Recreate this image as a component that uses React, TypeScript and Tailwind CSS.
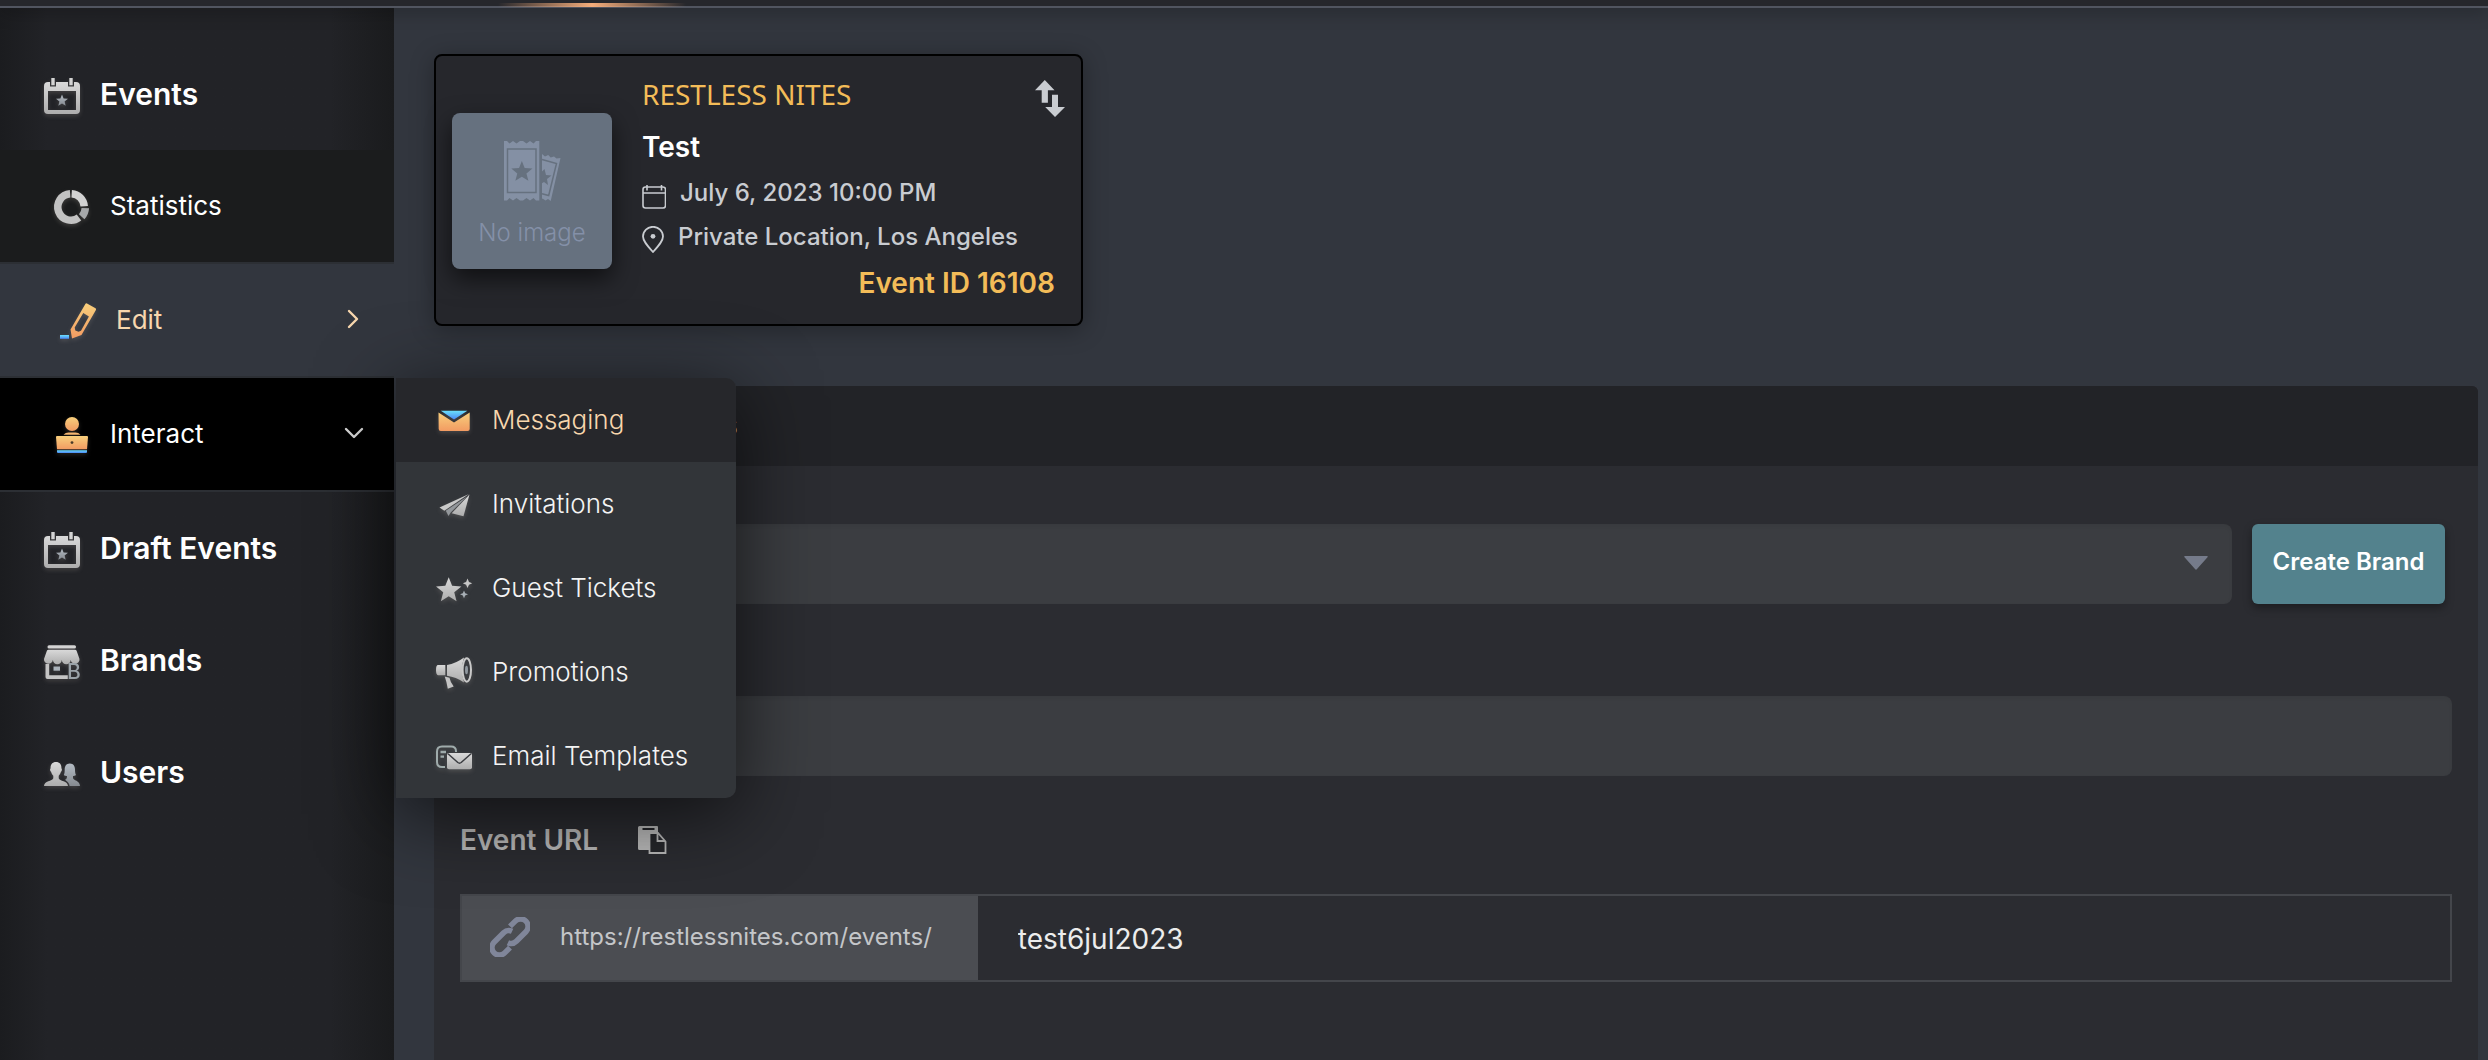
import { useState } from "react";
import type { ReactNode } from "react";

const STAR = "M12 0l3.2 8 8.8.6-6.8 5.5 2.2 8.4L12 17.9l-7.4 4.6 2.2-8.4L0 8.6 8.8 8z";

// Shared gradients for the menu icons
function IconDefs() {
  return (
    <svg className="absolute size-0" aria-hidden="true">
      <defs>
        <linearGradient id="silver" x1="0" y1="0" x2="0" y2="1">
          <stop offset="0" stopColor="#d9d9d9" />
          <stop offset="1" stopColor="#adadad" />
        </linearGradient>
        <linearGradient id="steel" x1="0" y1="0" x2="0" y2="1">
          <stop offset="0" stopColor="#b4bcc4" />
          <stop offset="1" stopColor="#858a90" />
        </linearGradient>
        <linearGradient id="amber" x1="0" y1="0" x2="0" y2="1">
          <stop offset="0" stopColor="#f8cf7c" />
          <stop offset="1" stopColor="#f29b62" />
        </linearGradient>
        <linearGradient id="sky" x1="0" y1="0" x2="0" y2="1">
          <stop offset="0" stopColor="#6be0fb" />
          <stop offset="1" stopColor="#4a86f5" />
        </linearGradient>
      </defs>
    </svg>
  );
}

function Icon({ children }: { children: ReactNode }) {
  return (
    <svg
      viewBox="0 0 36 36"
      aria-hidden="true"
      className="mt-1 size-9 shrink-0 overflow-visible drop-shadow-[0_2px_2px_rgba(200,190,180,0.2)]"
    >
      {children}
    </svg>
  );
}

function EventsIcon() {
  return (
    <Icon>
      <path
        fill="url(#silver)"
        fillRule="evenodd"
        d="M4 4h2v4.500h6V4h12v4.500h6V4h2a4 4 0 0 1 4 4v24a4 4 0 0 1-4 4H4a4 4 0 0 1-4-4V8a4 4 0 0 1 4-4zM4 13v19h28V13z"
      />
      <path fill="#d4d4d4" d="M7.300 0h3.400v7.200H7.300zM25.300 0h3.400v7.200h-3.400z" />
      <path fill="url(#steel)" transform="translate(12 16.500) scale(.5)" d={STAR} />
    </Icon>
  );
}

function StatisticsIcon() {
  return (
    <Icon>
      <g fill="none" strokeWidth="7.500">
        <path stroke="#d2d2d2" d="M17.700 4.800A13.250 13.250 0 0 1 30.200 17.300" />
        <path stroke="#a6a8aa" d="M31.300 19.200A13.250 13.250 0 0 1 27.700 27.700" />
        <path stroke="#c2c2c2" d="M25 28.600A13.250 13.250 0 1 1 16.100 4.800" />
      </g>
    </Icon>
  );
}

function EditIcon() {
  return (
    <Icon>
      <path
        fill="url(#amber)"
        fillRule="evenodd"
        d="M25.500 .8Q26 0 27 .5l8.500 4.800q1 .7.400 1.700L21.500 32 12 35.500l-1.500-9zM23.300 10 14.700 24.500l.6 3 3.200 1.200 2.500-1L28.900 13.400z"
      />
      <path fill="url(#sky)" d="M0 32h9v3.800H0z" />
    </Icon>
  );
}

function InteractIcon() {
  return (
    <Icon>
      <circle cx="18" cy="7" r="7" fill="url(#amber)" />
      <path fill="#f4b56f" d="M9.500 17.800q2-2.300 5-2.300h7q3 0 5 2.300z" />
      <path fill="url(#amber)" d="M3 19h30q1 0 1 1l-1 12.300H3L2 20q0-1 1-1z" />
      <circle cx="18" cy="25.600" r="1.400" fill="#4a3a28" />
      <path fill="url(#sky)" d="M3 33.200h30V35q0 1-1 1H4q-1 0-1-1z" />
    </Icon>
  );
}

function BrandsIcon() {
  return (
    <Icon>
      <rect x="3.500" y="1.200" width="28.500" height="3.300" rx="1.500" fill="#d4d4d4" />
      <path
        fill="url(#silver)"
        d="M4.500 5.700h26.500q1.200 0 1.600 1l2.900 8.300a4.400 4.400 0 0 1-8.800 0.800 4.400 4.400 0 0 1-8.900 0 4.400 4.400 0 0 1-8.900 0A4.400 4.400 0 0 1 0 15L2.900 6.700q.4-1 1.600-1z"
      />
      <path fill="#c4c4c4" d="M1.500 20h3.700v11.200h18.600V35H3.500q-2 0-2-2z" />
      <rect x="9.500" y="22.500" width="6.500" height="4.200" fill="#aab2ba" />
      <text x="23" y="35" fontSize="21" fontWeight="500" fill="#9aa2a8" className="font-['Inter',sans-serif]">
        B
      </text>
    </Icon>
  );
}

function UsersIcon() {
  return (
    <Icon>
      <path
        fill="url(#steel)"
        d="M25.800 7.500c3.700 0 5.200 2.800 5.200 6 0 2.700.3 4.200 1 5.500-1 .8-2 1-3 1v2c0 2.200 7 2.800 7 8H25.600c-.2-3-2.600-4.600-4.600-6.200 1.800-.8 2-1.800 2-3.800-1.200 0-2.400-.3-3.200-1 .8-1.600.9-3.200.9-5.500 0-3.200 1.400-6 5.100-6z"
      />
      <path
        fill="url(#silver)"
        d="M12 6c3.800 0 5.600 2.600 5.400 6.200.9.300.6 3.200-.5 3.600-.3 1.800-1.300 3-2.200 3.900v2.500C15.500 25 24 25 24 30H0c0-5 8.500-5 9.300-7.800v-2.500c-.9-.9-1.900-2.100-2.200-3.900-1.100-.4-1.400-3.300-.5-3.600C6.400 8.600 8.200 6 12 6z"
      />
    </Icon>
  );
}

function MessagingIcon() {
  return (
    <Icon>
      <path fill="url(#amber)" d="M2.500 9.500 18 19.400 33.700 9.500V26q0 2-2 2h-27q-2 0-2-2z" />
      <path fill="url(#sky)" d="M4.800 7.700h26.600L18 16.600z" />
    </Icon>
  );
}

function InvitationsIcon() {
  return (
    <Icon>
      <path fill="#c9c9c9" d="M33 7 3.500 20.500l4.800 3.200z" />
      <path fill="#93979b" d="M31 9.500 9.800 23.800l2.700 5.200 2.200-3.500z" />
      <path fill="url(#silver)" d="M33.500 7.500 15.700 26.300 27.500 29.300z" />
    </Icon>
  );
}

function GuestTicketsIcon() {
  return (
    <Icon>
      <path fill="url(#silver)" transform="translate(0 6.300) scale(1.060)" d={STAR} />
      <path fill="#c8c8c8" d="M31.500 7.600 33 11l3.200 1.300L33 13.700l-1.500 3.400-1.400-3.400-3.300-1.400 3.300-1.300z" />
      <path fill="#a9b0b6" d="M28 19.500l1.200 2.700 2.800 1.100-2.800 1.200L28 27.300l-1.200-2.800-2.800-1.200 2.800-1.100z" />
    </Icon>
  );
}

function PromotionsIcon() {
  return (
    <Icon>
      <path fill="url(#silver)" d="M2 10h7.300v10.300H2Q0 20 0 15t2-5z" />
      <path fill="url(#silver)" d="M11 10Q20 8.500 28 2.500q-4 12.500 0 25Q20 22 11 20.700z" />
      <path fill="#c4c4c4" d="M8.700 21.500l4.800 1.200q1 5 4.200 8.800l-5.900 2.200q-1-6.500-3.100-12.200z" />
      <ellipse cx="30.800" cy="15" rx="4.200" ry="11.700" fill="#3a3c40" stroke="#c9c9c9" strokeWidth="2" />
      <ellipse cx="30.500" cy="15" rx="1.500" ry="4.200" fill="#8f979e" />
    </Icon>
  );
}

function EmailTemplatesIcon() {
  return (
    <Icon>
      <g fill="none" stroke="#9fabab" strokeWidth="2">
        <path d="M9 28H6q-5 0-5-5V12.500q0-5 5-5h9q5 0 5 4.700V13" />
        <path d="M4.500 13H10M4.500 17.700H8" strokeWidth="2.300" />
      </g>
      <rect x="11" y="14" width="25" height="16.300" rx="2" fill="url(#silver)" />
      <path d="M12 14.800 21.800 23.500q1.700 1.300 3.400 0L35 14.800" fill="none" stroke="#3a3c40" strokeWidth="1.500" />
    </Icon>
  );
}

function ChevronIcon({ down }: { down?: boolean }) {
  return (
    <svg
      viewBox="0 0 20 20"
      aria-hidden="true"
      className={down ? "size-5 text-[#dcdcdc]" : "size-5 text-[#f8d7ae]"}
    >
      <path
        d={down ? "M2 6l8 8 8-8" : "M5 2l8 8-8 8"}
        fill="none"
        stroke="currentColor"
        strokeWidth="2.400"
        strokeLinecap="round"
        strokeLinejoin="round"
      />
    </svg>
  );
}

function TicketsIcon() {
  return (
    <svg viewBox="0 0 57 60" aria-hidden="true" className="h-[60px] w-[57px]">
      <path
        fill="#8490a4"
        d="M38 13l3 2.500 3.200-1.500 2.500 2.500 3.300-1 2.500 2 4-.500-9.800 43-2.700-2-2.500 1.500-3-2L38 58z"
      />
      <path d="M38 18.500l14.500 4-7.800 32L38 52.800" fill="none" stroke="#66717f" strokeWidth="1.500" />
      <path fill="#66717f" d="M40.500 28l1.500 6 5.500.500-4.500 3.500 1 6-4-3-2.500 1.500V31z" />
      <path
        fill="#8490a4"
        d="M0 0h3l2.500 2.500L9 0l3.500 2.500L16 0h3l3.500 2.500L26 0l3.500 2.500L32 0h3.300v59.500H32L29.500 57 26 59.500 22.500 57 19 59.500h-3L12.500 57 9 59.500 5.500 57 3 59.500H0z"
      />
      <rect x="3.500" y="8" width="28.500" height="43.500" fill="none" stroke="#66717f" strokeWidth="1.500" />
      <path fill="#66717f" transform="translate(7.300 20) scale(.88)" d={STAR} />
    </svg>
  );
}

const menu = [
  { label: "Messaging", icon: <MessagingIcon />, active: true },
  { label: "Invitations", icon: <InvitationsIcon /> },
  { label: "Guest Tickets", icon: <GuestTicketsIcon /> },
  { label: "Promotions", icon: <PromotionsIcon /> },
  { label: "Email Templates", icon: <EmailTemplatesIcon /> },
];

function InteractMenu() {
  return (
    <ul className="absolute top-0 left-full z-20 ml-0.5 w-[340px] overflow-hidden rounded-r-[10px] bg-[#323539] shadow-[0_16px_80px_rgba(0,0,0,0.65)]">
      {menu.map((item) => (
        <li key={item.label}>
          <a
            href="#"
            className={
              item.active
                ? "flex h-21 items-center gap-5 bg-[#26272b] pb-0.5 pl-10 text-[26px] font-light text-[#f8d7ae]"
                : "flex h-21 items-center gap-5 pb-0.5 pl-10 text-[26px] font-light text-[#f4f4f4]"
            }
          >
            {item.icon}
            {item.label}
          </a>
        </li>
      ))}
    </ul>
  );
}

function TopLink({ label, icon }: { label: string; icon: ReactNode }) {
  return (
    <li>
      <a href="#" className="flex h-28 items-center gap-5 pl-11 text-[30px] font-semibold text-white">
        {icon}
        {label}
      </a>
    </li>
  );
}

function Sidebar() {
  const [open, setOpen] = useState(true);

  return (
    <nav className="relative z-10 w-[394px] shrink-0 bg-[#222327] bg-linear-to-r from-[#1b1c1f] from-0% via-[#222327] via-12% to-[#222327]">
      <div className="pointer-events-none absolute inset-y-0 right-0 w-16 bg-linear-to-r from-transparent to-[#1a1b1d]" />
      <ul className="relative pt-[30px]">
        <TopLink label="Events" icon={<EventsIcon />} />
        <li>
          <a
            href="#"
            className="flex h-28 items-center gap-5 bg-[#1b1c1d] pb-0.5 pl-[54px] text-[26px] text-white"
          >
            <StatisticsIcon />
            Statistics
          </a>
        </li>
        <li>
          <a
            href="#"
            className="flex h-29 items-center gap-5 border-y-2 border-[#2c2f34] bg-[#32363e] pr-[30px] pb-0.5 pl-[60px] text-[26px] text-[#f8d7ae]"
          >
            <EditIcon />
            <span className="grow">Edit</span>
            <ChevronIcon />
          </a>
        </li>
        <li className="relative">
          <button
            type="button"
            aria-expanded={open}
            onClick={() => setOpen((o) => !o)}
            className="flex h-[114px] w-full items-center gap-5 border-b-2 border-[#2c2f34] bg-black pr-[30px] pb-0.5 pl-[54px] text-left text-[26px] text-white"
          >
            <InteractIcon />
            <span className="grow">Interact</span>
            <ChevronIcon down />
          </button>
          {open && <InteractMenu />}
        </li>
        <TopLink label="Draft Events" icon={<EventsIcon />} />
        <TopLink label="Brands" icon={<BrandsIcon />} />
        <TopLink label="Users" icon={<UsersIcon />} />
      </ul>
    </nav>
  );
}

function EventCard() {
  return (
    <section className="flex w-[649px] items-center rounded-lg border-2 border-black bg-[#26272c] px-4 pt-[18px] pb-[21px] shadow-[0_4px_24px_rgba(0,0,0,0.3)]">
      <div className="mt-1 flex h-[156px] w-40 shrink-0 flex-col items-center justify-end gap-4 rounded-lg bg-[#66717f] pb-5 shadow-[0_10px_24px_rgba(0,0,0,0.6)]">
        <TicketsIcon />
        <p className="text-2xl font-light text-[#8490a8]">No image</p>
      </div>
      <div className="ml-[30px] grow">
        <div className="flex h-[45px] items-start justify-between">
          <h2 className="font-['Noto_Sans',sans-serif] text-[28px] leading-10 text-[#f3bc58]">
            RESTLESS NITES
          </h2>
          <button type="button" aria-label="Switch event" className="mt-1.5">
            <svg viewBox="0 0 30 37" className="h-[37px] w-[30px]" fill="#c9ccd1">
              <path d="M9.800 0l9.700 10.300h-6.600v12.400H6.700V10.300H0zM17 14.700h6V27h7l-10 10-9.800-10H17z" />
            </svg>
          </button>
        </div>
        <h3 className="mt-2 text-[28px] leading-10 font-semibold text-white">Test</h3>
        <p className="mt-2 flex items-center gap-3.5 text-2xl leading-9 font-medium text-[#c9ccd1]">
          <svg viewBox="0 0 24 24" aria-hidden="true" className="mt-2 size-6" fill="none" stroke="currentColor" strokeWidth="1.600">
            <rect x="1" y="2" width="22.500" height="21" rx="2.500" />
            <path d="M1 8h22M5 0v5.500M19.500 0v5.500" />
          </svg>
          July 6, 2023 10:00 PM
        </p>
        <p className="mt-2 flex items-center gap-3.5 text-2xl leading-9 font-medium text-[#c9ccd1]">
          <svg viewBox="0 0 22 27" aria-hidden="true" className="mt-1 h-[27px] w-[22px]" fill="none" stroke="currentColor" strokeWidth="1.800">
            <path d="M11 26C5 19.500 1 15 1 10.500a10 9.700 0 0 1 20 0C21 15 17 19.500 11 26z" />
            <circle cx="11" cy="10.300" r="2.400" fill="currentColor" stroke="none" />
          </svg>
          Private Location, Los Angeles
        </p>
        <p className="mt-2 pr-2.5 text-right text-[28px] leading-10 font-semibold text-[#f3bc58]">
          Event ID 16108
        </p>
      </div>
    </section>
  );
}

function EventForm() {
  return (
    <section className="mt-[60px] flex grow flex-col overflow-hidden rounded-t-md bg-[#2b2c31] text-[28px]">
      <h2 className="flex h-20 items-center bg-[#222327] px-[26px] pb-0.5 font-medium text-[#c2c2c2]">
        Event Details &amp; Links
      </h2>
      <form className="flex flex-col px-[26px] pb-10">
        <label htmlFor="brand" className="h-[58px] leading-[58px] text-[#b4b5b7]">
          Brand
        </label>
        <div className="flex gap-5 pr-[7px]">
          <div className="relative grow">
            <select
              id="brand"
              className="h-20 w-full appearance-none rounded-lg bg-[#3b3d41] px-8 text-[#e8e8e8] inset-shadow-sm"
            >
              <option>Restless Nites</option>
            </select>
            <svg
              viewBox="0 0 24 14"
              aria-hidden="true"
              className="pointer-events-none absolute top-8 right-6 h-3.5 w-6"
            >
              <path fill="#757b8a" d="M1 0h22q1.500 0 .5 1.300L13 13q-1 1.500-2 0L.5 1.300Q-.5 0 1 0z" />
            </svg>
          </div>
          <button
            type="button"
            className="h-20 w-[193px] rounded-md bg-[#53828d] pb-1 text-2xl font-semibold text-white shadow-[0_4px_8px_rgba(0,0,0,0.35)]"
          >
            Create Brand
          </button>
        </div>
        <label htmlFor="name" className="mt-8 h-15 leading-15 text-[#b4b5b7]">
          Event Name
        </label>
        <input
          id="name"
          defaultValue="Test"
          className="h-20 w-full rounded-lg bg-[#3b3d41] px-8 text-[#e8e8e8] inset-shadow-sm"
        />
        <div className="mt-11 flex h-10 items-center gap-10">
          <label htmlFor="url" className="font-semibold text-[#b9b9b9]">
            Event URL
          </label>
          <button type="button" aria-label="Copy event URL">
            <svg viewBox="0 0 29 28" className="h-7 w-[29px]">
              <path fill="#bababa" d="M1.500 0H19q1 0 1 1v5h-9v18H1.500Q0 24 0 22.500v-21Q0 0 1.500 0z" />
              <path d="M4.500 3h12" stroke="#232428" strokeWidth="2" />
              <path
                d="M11.500 7H20l7.500 8.500V27h-16zM19.500 7.500V15h8"
                fill="#26272b"
                stroke="#bababa"
                strokeWidth="1.800"
              />
            </svg>
          </button>
        </div>
        <div className="mt-[34px] flex h-22 border-2 border-[#44464b]">
          <label
            htmlFor="url"
            className="flex items-center gap-[30px] bg-[#4b4d52] pr-[46px] pb-0.5 pl-7 text-2xl text-[#c4c6c9]"
          >
            <svg viewBox="0 0 40 40" aria-hidden="true" className="size-10">
              <g transform="translate(20 20) rotate(-45)" fill="none" stroke="#80869a" strokeWidth="5.500">
                <path d="M7.500-7.500H15a7.500 7.500 0 0 1 0 15H1.500a7.500 7.500 0 0 1-7-5" />
                <path d="M-7.500 7.500H-15a7.500 7.500 0 0 1 0-15H-1.500a7.500 7.500 0 0 1 7 5" />
              </g>
            </svg>
            https://restlessnites.com/events/
          </label>
          <input
            id="url"
            defaultValue="test6jul2023"
            className="min-w-0 grow bg-transparent px-10 pt-0.5 text-[#ececec]"
          />
        </div>
      </form>
    </section>
  );
}

export default function App() {
  return (
    <div className="flex min-h-screen flex-col bg-[#32363e] font-['Inter',sans-serif]">
      <IconDefs />
      <header className="relative z-30 h-2 border-b-2 border-[#515560] bg-[#26272c] shadow-[0_2px_18px_rgba(0,0,0,0.4)]">
        <div className="absolute top-[3px] left-[498px] h-1 w-[188px] bg-linear-to-r from-transparent via-[#f5ad7b] to-transparent" />
      </header>
      <div className="flex grow">
        <Sidebar />
        <main className="flex grow flex-col pt-[46px] pr-2.5 pl-10">
          <EventCard />
          <EventForm />
        </main>
      </div>
    </div>
  );
}
